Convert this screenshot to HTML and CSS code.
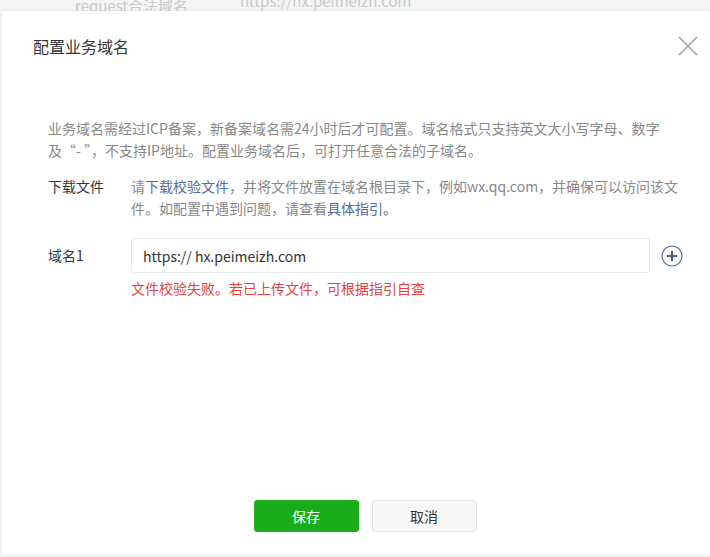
FILE: index.html
```html
<!DOCTYPE html>
<html lang="zh-CN">
  <head>
    <meta charset="utf8" />
    <title>配置业务域名</title>
    <link rel="stylesheet" href="styles.css">
  </head>
  <body>
    <div class="page">
      <div class="page-row">
        <span class="page-label">request合法域名</span>
        <span class="page-value">https://hx.peimeizh.com</span>
      </div>
    </div>
    <div class="dialog">
      <div class="dialog-hd">
        <h3>配置业务域名</h3>
        <button class="btn-close" title="关闭">
          <svg width="20" height="20" viewBox="0 0 20 20"><path d="M1 1L19 19M19 1L1 19" stroke="#9a9a9a" stroke-width="1.4" fill="none"/></svg>
        </button>
      </div>
      <div class="dialog-bd">
        <p class="tips desc">业务域名需经过ICP备案，新备案域名需24小时后才可配置。域名格式只支持英文大小写字母、数字及“- ”，不支持IP地址。配置业务域名后，可打开任意合法的子域名。</p>
        <div class="form-row">
          <label class="form-label">下载文件</label>
          <div class="form-ctrl tips">请<a href="#">下载校验文件</a>，并将文件放置在域名根目录下，例如wx.qq.com，并确保可以访问该文件。如配置中遇到问题，请查看<a href="#">具体指引。</a></div>
        </div>
        <div class="form-row domain-row">
          <label class="form-label">域名1</label>
          <div class="form-ctrl">
            <div class="input-line">
              <input class="text-input" type="text" value="https:// hx.peimeizh.com" />
              <a class="btn-add" href="#">
                <svg width="22" height="22" viewBox="0 0 22 22"><circle cx="11" cy="11" r="10" stroke="#5b6b9c" stroke-width="1.2" fill="none"/><path d="M6 11H16M11 6V16" stroke="#4a5a8c" stroke-width="2" fill="none"/></svg>
              </a>
            </div>
            <p class="error">文件校验失败。若已上传文件，可根据指引自查</p>
          </div>
        </div>
      </div>
      <div class="dialog-ft">
        <button class="btn btn-primary">保存</button>
        <button class="btn btn-default">取消</button>
      </div>
    </div>
  </body>
</html>
```

FILE: styles.css
```css
/* Reset */
body, html {
  margin: 0;
  padding: 0;
  font-family: "Noto Sans CJK SC", "Noto Sans", sans-serif;
  font-size: 14px;
  color: #353535;
}
* {
  box-sizing: border-box;
}
body {
  background: #f4f5f6;
  height: 557px;
  overflow: hidden;
  position: relative;
}
p {
  margin: 0;
}
a {
  color: #576b95;
  text-decoration: none;
}

/* page under the dialog */
.page {
  padding-left: 75px;
  margin-top: -11px;
  color: #c9c9c9;
  font-size: 15px;
}
.page-row {
  display: flex;
  line-height: 24px;
}
.page-label {
  width: 165px;
  padding-top: 5px;
}

/* dialog */
.dialog {
  position: absolute;
  left: 2px;
  top: 11px;
  width: 726px;
  height: 544px;
  background: #fff;
  box-shadow: 0 0 4px rgba(0, 0, 0, 0.06);
  display: flex;
  flex-direction: column;
}
.dialog-hd {
  height: 70px;
  padding: 0 30px 0 31px;
  display: flex;
  align-items: center;
  justify-content: space-between;
}
.dialog-hd h3 {
  margin: 0;
  font-size: 16px;
  font-weight: normal;
  color: #353535;
}
.btn-close {
  border: 0;
  background: none;
  padding: 0;
  width: 20px;
  height: 20px;
  cursor: pointer;
}
.dialog-bd {
  flex: 1;
  padding: 36px 46px 0;
}
.tips {
  color: #888;
  line-height: 22px;
}
.desc {
  width: 622px;
}
.form-row {
  display: flex;
  margin-top: 14px;
}
.form-label {
  width: 83px;
  flex-shrink: 0;
  line-height: 22px;
  color: #353535;
}
.form-ctrl {
  width: 552px;
}
.domain-row {
  margin-top: 19px;
}
.domain-row .form-label {
  line-height: 35px;
}
.input-line {
  display: flex;
  align-items: center;
}
.text-input {
  width: 520px;
  height: 35px;
  border: 1px solid #e4e8eb;
  border-radius: 3px;
  padding: 0 11px;
  font: inherit;
  color: #353535;
  outline: none;
}
.btn-add {
  display: flex;
  margin-left: 11px;
}
.error {
  color: #e64340;
  margin-top: 5px;
  line-height: 20px;
}
.dialog-ft {
  display: flex;
  justify-content: center;
  gap: 13px;
  padding-bottom: 23px;
}
.btn {
  width: 105px;
  height: 32px;
  border-radius: 3px;
  font: inherit;
  cursor: pointer;
}
.btn-primary {
  background: #1aad19;
  border: 1px solid #1aad19;
  color: #fff;
}
.btn-default {
  background: #f8f8f8;
  border: 1px solid #e3e5e8;
  color: #353535;
}
```
